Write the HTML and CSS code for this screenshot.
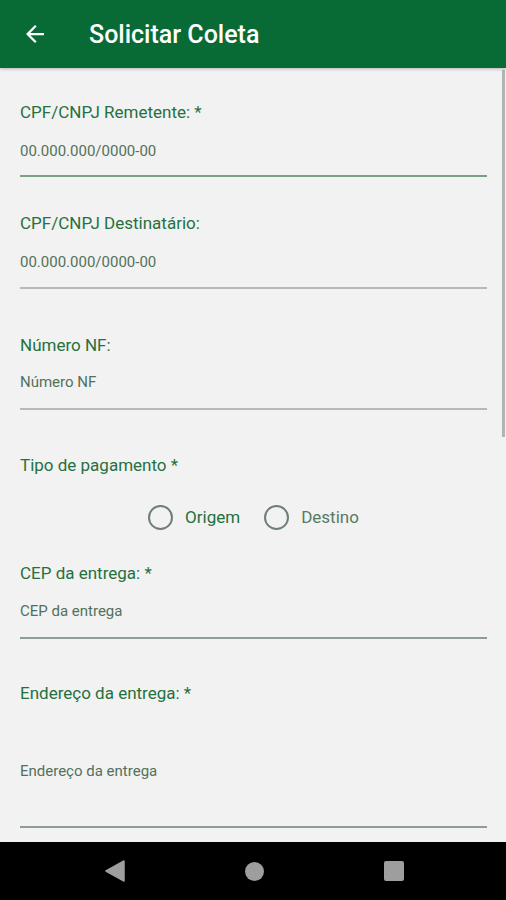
FILE: index.html
```html
<!DOCTYPE HTML>
<html lang="pt-br">

<head>
    <meta charset="utf-8">
    <meta name="viewport" content="width=device-width, initial-scale=1">
    <title>Solicitar Coleta</title>
    <link rel="stylesheet" href="styles.css">
</head>

<body>
    <div class="app">
        <header class="toolbar">
            <svg class="back" viewBox="4 4 16 16" width="20" height="20">
                <path d="M20 11H7.83l5.59-5.59L12 4l-8 8 8 8 1.41-1.41L7.83 13H20v-2z" fill="#fff"/>
            </svg>
            <h1 class="title">Solicitar Coleta</h1>
        </header>

        <main class="content">
            <div class="scrollbar"></div>

            <div class="field f1">
                <label class="label">CPF/CNPJ Remetente: *</label>
                <div class="input focused">00.000.000/0000-00</div>
            </div>

            <div class="field f2">
                <label class="label">CPF/CNPJ Destinatário:</label>
                <div class="input">00.000.000/0000-00</div>
            </div>

            <div class="field f3">
                <label class="label">Número NF:</label>
                <div class="input">Número NF</div>
            </div>

            <div class="field f4">
                <label class="label">Tipo de pagamento *</label>
                <div class="radios">
                    <span class="radio"><span class="circle"></span><span class="opt green">Origem</span></span>
                    <span class="radio"><span class="circle"></span><span class="opt">Destino</span></span>
                </div>
            </div>

            <div class="field f5">
                <label class="label">CEP da entrega: *</label>
                <div class="input soft">CEP da entrega</div>
            </div>

            <div class="field f6">
                <label class="label">Endereço da entrega: *</label>
                <div class="input soft">Endereço da entrega</div>
            </div>
        </main>

        <nav class="navbar">
            <svg width="20" height="22" viewBox="0 0 20 22"><path d="M19 1 L19 21 L1 11 Z" fill="#9e9e9e" stroke="#9e9e9e" stroke-width="1.5" stroke-linejoin="round"/></svg>
            <span class="home"></span>
            <span class="recent"></span>
        </nav>
    </div>
</body>

</html>
```

FILE: styles.css
```css
body {
    margin: 0;
    font-family: Roboto, "Noto Sans", sans-serif;
    background-color: #f2f2f2;
}

.app {
    width: 506px;
    height: 900px;
    display: flex;
    flex-direction: column;
    overflow: hidden;
}

.toolbar {
    height: 68px;
    flex: none;
    background-color: #086b36;
    display: flex;
    align-items: center;
    box-shadow: 0 1px 3px rgba(0, 0, 0, 0.25);
    position: relative;
    z-index: 1;
}

.back {
    margin-left: 25px;
    width: 20px;
    height: 18px;
}

.title {
    margin: 0 0 0 44px;
    color: #fff;
    font-size: 25px;
    font-weight: 500;
}

.content {
    flex: 1;
    position: relative;
    padding: 34px 19px 0 20px;
}

.scrollbar {
    position: absolute;
    right: 1px;
    top: 2px;
    width: 3px;
    height: 367px;
    background-color: #b3b3b3;
}

.label {
    display: block;
    line-height: 20px;
    font-size: 17px;
    color: #26703f;
}

.input {
    line-height: 20px;
    font-size: 15px;
    color: #52715a;
    border-bottom: 2px solid #b8b8b8;
}

.input.focused {
    border-bottom-color: #7d9d84;
}

.input.soft {
    border-bottom-color: #8e9e92;
}

.f1 .input { padding: 19px 0 14px; }

.f2 { margin-top: 36px; }
.f2 .input { padding: 19px 0 15px; }

.f3 { margin-top: 46px; }
.f3 .input { padding: 17px 0 16px; }

.f4 { margin-top: 45px; }

.f5 { margin-top: 34px; }
.f5 .input { padding: 18px 0 16px; }

.f6 { margin-top: 44px; }
.f6 .input { padding: 58px 0 45px; }

.radios {
    margin-top: 30px;
    height: 24px;
    display: flex;
    justify-content: center;
    gap: 24px;
}

.radio {
    display: flex;
    align-items: center;
    gap: 12px;
}

.circle {
    width: 21px;
    height: 21px;
    border: 2px solid #6f7f73;
    border-radius: 50%;
}

.opt {
    font-size: 17px;
    color: #587a62;
}

.opt.green {
    color: #24703f;
}

.navbar {
    height: 58px;
    flex: none;
    background-color: #000;
    display: flex;
    align-items: center;
    justify-content: center;
    gap: 120px;
    padding-left: 2px;
}

.home {
    width: 19px;
    height: 19px;
    border-radius: 50%;
    background-color: #9e9e9e;
}

.recent {
    width: 20px;
    height: 20px;
    border-radius: 2px;
    background-color: #9e9e9e;
}
```
